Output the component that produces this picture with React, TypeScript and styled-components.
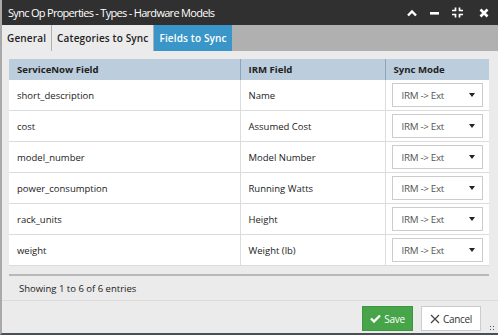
import React from "react";
import styled, { createGlobalStyle } from "styled-components";

const GlobalStyle = createGlobalStyle`
  html, body { margin: 0; padding: 0; }
  body {
    font-family: "Open Sans", "Liberation Sans", sans-serif;
    background: #ebebeb;
  }
`;

const Dialog = styled.div`
  width: 498px;
  height: 335px;
  display: flex;
  flex-direction: column;
  background: #ebebeb;
  border-left: 2px solid #a9a9a9;
  border-bottom: 2px solid #4a4f55;
  box-sizing: border-box;
  position: relative;
  overflow: hidden;
`;

const TitleBar = styled.div`
  height: 25px;
  background: #303030;
  display: flex;
  align-items: center;
  padding: 0 8px 0 6px;
  flex-shrink: 0;
`;

const Title = styled.div`
  flex: 1;
  color: #ffffff;
  font-size: 11px;
  letter-spacing: -0.7px;
`;

const TitleButtons = styled.div`
  display: flex;
  align-items: center;
  gap: 10px;
`;

const IconButton = styled.span<{ $w?: number; $ml?: number }>`
  display: flex;
  width: ${(p) => p.$w ?? 12}px;
  height: 12px;
  margin-left: ${(p) => p.$ml ?? 0}px;
  align-items: center;
  justify-content: center;
`;

const TabBar = styled.div`
  height: 26px;
  background: #b0b0b0;
  display: flex;
  flex-shrink: 0;
`;

const Tab = styled.div<{ $active?: boolean }>`
  display: flex;
  align-items: center;
  padding: 0 5px;
  margin-right: 1px;
  font-size: 10px;
  font-weight: 600;
  letter-spacing: 0.15px;
  color: ${(p) => (p.$active ? "#ffffff" : "#222222")};
  background: ${(p) => (p.$active ? "#3a96c8" : "#ebebeb")};
`;

const Body = styled.div`
  flex: 1;
  min-width: 0;
  padding: 8px 9px 0 7px;
  display: flex;
  flex-direction: column;
`;

const TableWrap = styled.div`
  border-bottom: 2px solid #b8b8b8;
  padding-bottom: 8px;
`;

const Table = styled.table`
  width: 480px;
  table-layout: fixed;
  border-collapse: collapse;
  background: #ffffff;
  font-size: 9.5px;
  color: #222222;
`;

const HeadCell = styled.th<{ $w: number }>`
  box-sizing: border-box;
  width: ${(p) => p.$w}px;
  height: 21px;
  background: #bccddd;
  text-align: left;
  font-weight: 700;
  font-size: 9.6px;
  padding: 0 8px;
  border-left: 1px solid #8aa5bf;
  &:first-child { border-left: none; }
`;

const Cell = styled.td`
  height: 30px;
  padding: 0 8px;
  border-left: 1px solid #dcdcdc;
  border-bottom: 1px solid #dcdcdc;
  &:first-child { border-left: none; }
`;

const SelectCell = styled(Cell)`
  padding: 0 6px;
`;

const Select = styled.div`
  height: 22px;
  border: 1px solid #cccccc;
  display: flex;
  align-items: center;
  justify-content: space-between;
  padding: 0 7px 0 9px;
  color: #555555;
  font-size: 9.8px;
  letter-spacing: -0.3px;
  background: #ffffff;
`;

const Caret = styled.span`
  width: 0;
  height: 0;
  border-left: 3.5px solid transparent;
  border-right: 3.5px solid transparent;
  border-top: 4px solid #222;
`;

const Info = styled.div`
  height: 24px;
  display: flex;
  align-items: center;
  font-size: 9.5px;
  color: #222222;
  border-bottom: 1px solid #dadada;
  margin: 0 -9px 0 -7px;
  padding-left: 17px;
`;

const Footer = styled.div`
  flex: 1;
  display: flex;
  justify-content: flex-end;
  align-items: center;
  gap: 8px;
  padding-right: 8px;
`;

const Button = styled.button<{ $primary?: boolean }>`
  height: 25px;
  display: flex;
  align-items: center;
  justify-content: center;
  gap: 3px;
  font-family: "Open Sans", "Liberation Sans", sans-serif;
  font-size: 10px;
  width: ${(p) => (p.$primary ? "51px" : "60px")};
  padding: 0;
  border: 1px solid ${(p) => (p.$primary ? "#3e9540" : "#cccccc")};
  background: ${(p) => (p.$primary ? "#46a548" : "#ffffff")};
  color: ${(p) => (p.$primary ? "#ffffff" : "#333333")};
  letter-spacing: -0.3px;
  margin-top: 3px;
`;

const Grip = styled.div`
  position: absolute;
  right: 3px;
  bottom: 2px;
  width: 6px;
  height: 6px;
  background-image: radial-gradient(#555 0.8px, transparent 1px);
  background-size: 3px 3px;
`;

const rows = [
  ["short_description", "Name"],
  ["cost", "Assumed Cost"],
  ["model_number", "Model Number"],
  ["power_consumption", "Running Watts"],
  ["rack_units", "Height"],
  ["weight", "Weight (lb)"],
];

export default function App() {
  return (
    <>
      <GlobalStyle />
      <Dialog>
        <TitleBar>
          <Title>Sync Op Properties - Types - Hardware Models</Title>
          <TitleButtons>
            <IconButton>
              <svg width="10" height="8" viewBox="0 0 10 8">
                <path d="M1 6.5 L5 2.5 L9 6.5" stroke="#fff" strokeWidth="2.4" fill="none" />
              </svg>
            </IconButton>
            <IconButton>
              <svg width="9" height="4" viewBox="0 0 9 4">
                <rect x="0" y="1" width="9" height="2.6" fill="#fff" />
              </svg>
            </IconButton>
            <IconButton $w={14}>
              <svg width="13" height="11" viewBox="0 0 13 11">
                <path
                  d="M1 3.5 H4.5 V0.5 M8.5 0.5 V3.5 H12 M1 7.5 H4.5 V10.5 M8.5 10.5 V7.5 H12"
                  stroke="#fff"
                  strokeWidth="1.7"
                  fill="none"
                />
              </svg>
            </IconButton>
            <IconButton $ml={4}>
              <svg width="10" height="10" viewBox="0 0 10 10">
                <path d="M1.5 1.5 L8.5 8.5 M8.5 1.5 L1.5 8.5" stroke="#fff" strokeWidth="2.6" />
              </svg>
            </IconButton>
          </TitleButtons>
        </TitleBar>
        <TabBar>
          <Tab>General</Tab>
          <Tab>Categories to Sync</Tab>
          <Tab $active>Fields to Sync</Tab>
        </TabBar>
        <Body>
          <TableWrap>
            <Table>
              <thead>
                <tr>
                  <HeadCell $w={231}>ServiceNow Field</HeadCell>
                  <HeadCell $w={145}>IRM Field</HeadCell>
                  <HeadCell $w={104}>Sync Mode</HeadCell>
                </tr>
              </thead>
              <tbody>
                {rows.map(([a, b]) => (
                  <tr key={a}>
                    <Cell>{a}</Cell>
                    <Cell>{b}</Cell>
                    <SelectCell>
                      <Select>
                        IRM -&gt; Ext
                        <Caret />
                      </Select>
                    </SelectCell>
                  </tr>
                ))}
              </tbody>
            </Table>
          </TableWrap>
          <Info>Showing 1 to 6 of 6 entries</Info>
          <Footer>
            <Button $primary>
              <svg width="11" height="9" viewBox="0 0 11 9">
                <path d="M1 4.5 L4 7.5 L10 1.5" stroke="#fff" strokeWidth="2.4" fill="none" />
              </svg>
              Save
            </Button>
            <Button>
              <svg width="10" height="10" viewBox="0 0 10 10">
                <path d="M1 1 L9 9 M9 1 L1 9" stroke="#444" strokeWidth="1.2" />
              </svg>
              Cancel
            </Button>
          </Footer>
        </Body>
        <Grip />
      </Dialog>
    </>
  );
}
